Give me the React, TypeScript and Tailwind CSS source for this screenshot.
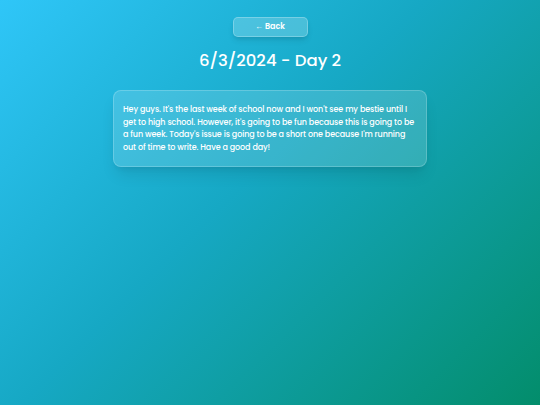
import React from "react";

const App = () => {
  return (
    <div className="min-h-screen w-full bg-[linear-gradient(135deg,#2fc6f8_0%,#16a8c4_45%,#038d6b_100%)] font-['Poppins','Open_Sans',sans-serif] text-white">
      <div className="flex flex-col items-center pt-[17px]">
        <button
          type="button"
          className="h-[20px] w-[75px] rounded-[5px] border border-white/25 bg-white/20 text-[8px] font-semibold shadow-md"
        >
          ← Back
        </button>
        <h1 className="mt-[12px] text-[16.5px] font-medium leading-[24px]">6/3/2024 - Day 2</h1>
        <div className="mt-[17px] w-[314px] rounded-[8px] border border-white/20 bg-white/15 px-[9px] pt-[13px] pb-[12px] shadow-lg">
          <p className="text-[8px] font-medium leading-[12.5px] tracking-[-0.1px]">
            Hey guys. It's the last week of school now and I won't see my bestie until I get to high school. However,
            it's going to be fun because this is going to be a fun week. Today's issue is going to be a short one
            because I'm running out of time to write. Have a good day!
          </p>
        </div>
      </div>
    </div>
  );
};

export default App;
